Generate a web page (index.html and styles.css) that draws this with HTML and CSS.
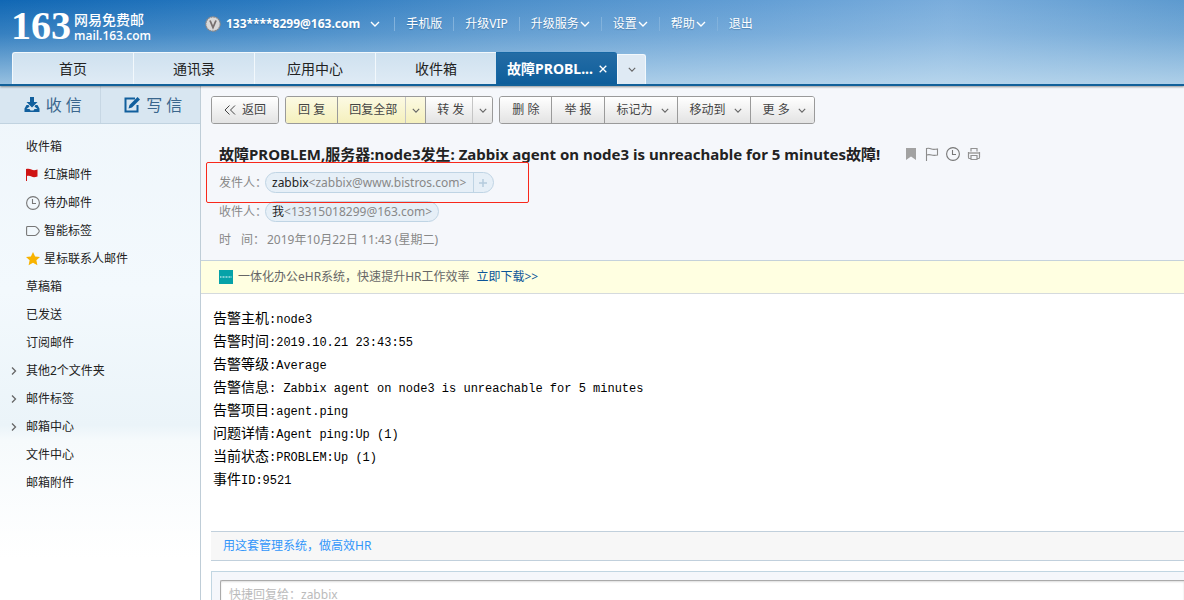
FILE: index.html
```html
<!DOCTYPE html>
<html lang="zh-CN">
<head>
<meta charset="utf-8">
<title>网易免费邮</title>
<link rel="stylesheet" href="styles.css">
</head>
<body>
<svg class="defs" aria-hidden="true">
  <symbol id="down" viewBox="0 0 10 6"><path d="M1 1l4 4 4-4" fill="none" stroke="currentColor" stroke-width="1.4"/></symbol>
  <symbol id="right" viewBox="0 0 6 8"><path d="M1 .5L4.500 4 1 7.500" fill="none" stroke="currentColor" stroke-width="1.300"/></symbol>
  <symbol id="clock" viewBox="0 0 14 14"><circle cx="7" cy="7" r="6.400" fill="none" stroke="currentColor" stroke-width="1.100"/><path d="M6.500 3v4.500H10" fill="none" stroke="currentColor" stroke-width="1.100"/></symbol>
</svg>
<header class="header">
  <div class="topline">
    <a class="logo" href="#"><span class="logo-num">163</span><span class="logo-text"><span class="logo-cn">网易免费邮</span><span class="logo-en">mail.163.com</span></span></a>
    <nav class="account">
      <svg class="medal" viewBox="0 0 16 16"><circle cx="8" cy="8" r="7.200" fill="#d9d9d9" stroke="#8c8888" stroke-width="1.200" stroke-dasharray="2 .6"/><path d="M5 4.500L8 11.500l3-7" fill="none" stroke="#77706f" stroke-width="1.800"/></svg>
      <a class="user" href="#">133****8299@163.com <svg class="down"><use href="#down"/></svg></a>
      <a href="#">手机版</a>
      <a href="#">升级VIP</a>
      <a href="#">升级服务<svg class="down"><use href="#down"/></svg></a>
      <a href="#">设置<svg class="down"><use href="#down"/></svg></a>
      <a href="#">帮助<svg class="down"><use href="#down"/></svg></a>
      <a href="#">退出</a>
    </nav>
  </div>
  <nav class="tabs">
    <a class="tab" href="#">首页</a>
    <a class="tab" href="#">通讯录</a>
    <a class="tab" href="#">应用中心</a>
    <a class="tab" href="#">收件箱</a>
    <div class="tab active"><a href="#">故障PROBL...</a><button class="close" aria-label="关闭"><svg viewBox="0 0 8 8"><path d="M.7.700l6.600 6.600M7.300.700L.700 7.300" stroke="currentColor" stroke-width="1.300"/></svg></button></div>
    <button class="tab-more" aria-label="更多标签"><svg class="down small"><use href="#down"/></svg></button>
  </nav>
</header>
<div class="layout">
  <aside class="sidebar">
    <div class="actions">
      <button><svg viewBox="0 0 16 16"><path d="M6 0h4v5h3.500L8 10.500 2.500 5H6zM2.500 8L.500 11.500V15h15v-3.500L13.500 8h-2l-1 1.500 3 2.500h-3l-1 1.500h-3l-1-1.500h-3l3-2.500-1-1.500z" fill="currentColor"/></svg>收 信</button>
      <button><svg viewBox="0 0 16 16"><path d="M11 1.500H1.500v13h12V8" fill="none" stroke="currentColor" stroke-width="2"/><path d="M13.500 0L16 2.500 8 10.500l-3.500 1 1-3.500z" fill="currentColor"/></svg>写 信</button>
    </div>
    <nav class="folders">
      <a href="#">收件箱</a>
      <a href="#"><svg class="icon" viewBox="0 0 14 14"><path d="M0 1C2 .300 4 .700 5.500 1.500s3 1 6 0v7c-3 1-4.500.800-6 0S2.500 7.500 1 8v5H0z" fill="#cf1414"/></svg>红旗邮件</a>
      <a href="#"><svg class="icon gray"><use href="#clock"/></svg>待办邮件</a>
      <a href="#"><svg class="icon gray" viewBox="0 0 14 14"><path d="M1.500 2.500H9c1.500 0 4.300 3.500 4.300 4.500S10.500 11.500 9 11.500H1.500Q.600 11.500.600 10.600V3.400Q.600 2.500 1.500 2.500z" fill="none" stroke="currentColor" stroke-width="1.100"/></svg>智能标签</a>
      <a href="#"><svg class="icon" viewBox="0 0 14 14"><path d="M7 0l2.100 4.400 4.900.600-3.600 3.300 1 4.900L7 10.800l-4.400 2.400 1-4.900L0 5l4.900-.6z" fill="#f8b300"/></svg>星标联系人邮件</a>
      <a href="#">草稿箱</a>
      <a href="#">已发送</a>
      <a href="#">订阅邮件</a>
      <a class="group" href="#"><svg class="right"><use href="#right"/></svg>其他2个文件夹</a>
      <a class="group" href="#"><svg class="right"><use href="#right"/></svg>邮件标签</a>
      <a class="group" href="#"><svg class="right"><use href="#right"/></svg>邮箱中心</a>
      <a href="#">文件中心</a>
      <a href="#">邮箱附件</a>
    </nav>
  </aside>
  <main class="main">
    <section class="mail-head">
      <div class="toolbar">
        <div class="buttons"><button class="back"><svg viewBox="0 0 12 10"><path d="M5.500.500L1 5l4.500 4.500M11 .500L6.500 5 11 9.500" fill="none" stroke="currentColor"/></svg>返回</button></div>
        <div class="buttons">
          <button class="yellow">回 复</button><button class="yellow split">回复全部</button><button class="yellow arrow" aria-label="回复选项"><svg class="down small"><use href="#down"/></svg></button><button class="split">转 发</button><button class="arrow" aria-label="转发选项"><svg class="down small"><use href="#down"/></svg></button>
        </div>
        <div class="buttons">
          <button>删 除</button><button>举 报</button><button class="drop">标记为<svg class="down small"><use href="#down"/></svg></button><button class="drop">移动到<svg class="down small"><use href="#down"/></svg></button><button class="drop">更 多<svg class="down small"><use href="#down"/></svg></button>
        </div>
      </div>
      <div class="subject">
        <h1>故障PROBLEM,服务器:node3发生: Zabbix agent on node3 is unreachable for 5 minutes故障!</h1>
        <div class="marks">
          <button aria-label="标签"><svg viewBox="0 0 14 14"><path d="M2 1h10v12L7 9.500 2 13z" fill="#a2a2a2"/></svg></button>
          <button aria-label="红旗"><svg viewBox="0 0 14 14"><path d="M1.500 14V1.500C4 .800 5 1.300 6.500 2s3.500.500 6 0v6c-2.500.500-4 .600-6 0s-3-.6-5 0" fill="none" stroke="#8b8b8b" stroke-width="1.100"/></svg></button>
          <button aria-label="待办"><svg><use href="#clock"/></svg></button>
          <button aria-label="打印"><svg viewBox="0 0 14 14"><path d="M4 4.500v-3h6v3M3.500 11.500h-1.500Q1.500 11.500 1.500 10V5.500h11V10q0 1.500-.5 1.500h-1.500M4 8.500h6v4H4z" fill="none" stroke="#929292" stroke-width="1.200"/><path d="M2 5h10v2H2z" fill="#b5b5b5"/></svg></button>
        </div>
      </div>
      <dl class="meta">
        <div class="row"><dt>发件人：</dt><dd><span class="chip"><b>zabbix</b>&lt;zabbix@www.bistros.com&gt;<button aria-label="添加联系人"><svg viewBox="0 0 8 8"><path d="M4 0v8M0 4h8" stroke="#b5cbdd" stroke-width="1.500"/></svg></button></span></dd></div>
        <div class="row"><dt>收件人：</dt><dd><span class="chip"><b>我</b>&lt;13315018299@163.com&gt;</span></dd></div>
        <div class="row time"><dt><span>时</span><span>间：</span></dt><dd>2019年10月22日 11:43 (星期二)</dd></div>
        <div class="highlight"></div>
      </dl>
    </section>
    <aside class="promo"><svg viewBox="0 0 14 14"><path d="M0 0h14v14H0z" fill="#06a2a8"/><path d="M1 7h12" stroke="#a4dfe1" stroke-width="1.500" stroke-dasharray="1 .5"/></svg><span>一体化办公eHR系统，快速提升HR工作效率</span><a href="#">立即下载&gt;&gt;</a></aside>
    <article class="content">
      <p>告警主机<span>:node3</span></p>
      <p>告警时间<span>:2019.10.21 23:43:55</span></p>
      <p>告警等级<span>:Average</span></p>
      <p>告警信息<span>: Zabbix agent on node3 is unreachable for 5 minutes</span></p>
      <p>告警项目<span>:agent.ping</span></p>
      <p>问题详情<span>:Agent ping:Up (1)</span></p>
      <p>当前状态<span>:PROBLEM:Up (1)</span></p>
      <p>事件<span>ID:9521</span></p>
    </article>
    <div class="footer-ad"><a href="#">用这套管理系统，做高效HR</a></div>
    <form class="reply"><textarea aria-label="快捷回复" placeholder="快捷回复给：zabbix"></textarea></form>
  </main>
</div>
</body>
</html>
```
FILE: styles.css
```css
* { box-sizing: border-box; }
body, h1, p, dl, dd { margin: 0; }
body {
  display: flex;
  flex-direction: column;
  height: 100vh;
  overflow: hidden;
  background: #fff;
  color: #222;
  font: 12px/20px "Noto Sans", "Noto Sans CJK SC", sans-serif;
}
a { color: inherit; text-decoration: none; }
button { margin: 0; padding: 0; border: 0; background: none; color: inherit; font: inherit; }
svg { flex: none; display: block; }
.defs { position: absolute; width: 0; height: 0; }
.down { width: 10px; height: 6px; }
.down.small { width: 8px; height: 5px; color: #666; }

.header {
  flex: none;
  position: relative;
  border-bottom: 2px solid #12619a;
  box-shadow: 0 1px 2px rgba(0, 0, 0, .4);
  background:
    linear-gradient(rgba(208, 230, 243, 0), rgba(208, 230, 243, .2) 40%, rgba(208, 230, 243, .7)),
    linear-gradient(90deg, #1067b4, #2a79bf 22%, #4b8eca 42%, #649fd5 65%, #7aaddc 80%, #5d9acf);
}
.topline { display: flex; align-items: center; height: 52px; padding-left: 11px; color: #fff; }
.logo { display: flex; align-items: center; gap: 3px; width: 194px; }
.logo-num { font: bold 40px/52px "Liberation Serif", serif; }
.logo-text { display: flex; flex-direction: column; padding-top: 4px; }
.logo-cn { font-size: 14px; line-height: 16px; font-weight: 500; }
.logo-en { font: 600 12px/16px "Open Sans", sans-serif; }
.account { display: flex; align-items: center; height: 48px; margin-bottom: 4px; }
.account a { display: flex; align-items: center; gap: 1px; padding: 0 11px; line-height: 14px; white-space: nowrap; text-shadow: 0 1px 1px rgba(0, 50, 100, .3); }
.account a + a { border-left: 1px solid #82b2dc; }
.account .user { gap: 10px; padding-left: 5px; padding-right: 14px; font-weight: bold; }
.medal { width: 16px; height: 16px; }

.tabs { display: flex; align-items: flex-end; height: 32px; padding-left: 12px; font-size: 14px; }
.tab {
  display: flex;
  align-items: center;
  justify-content: center;
  width: 121px;
  height: 32px;
  border-top: 1px solid #f2f8fc;
  border-left: 1px solid #f2f8fc;
  background: linear-gradient(#cfe1ef, #dfebf5);
}
.tab:first-child { border-top-left-radius: 3px; }
.tab.active { gap: 6px; border-color: #1768a5; border-top-right-radius: 3px; background: linear-gradient(#246ca5, #0e5e9b); color: #fff; font-weight: bold; white-space: nowrap; }
.close svg { width: 8px; height: 8px; }
.tab-more { display: flex; align-items: center; justify-content: center; width: 29px; height: 30px; border: 1px solid #f2f8fc; border-bottom: 0; border-radius: 0 3px 0 0; background: #dfeaf4; }

.layout { display: flex; flex: 1; min-height: 0; }
.sidebar {
  flex: none;
  width: 201px;
  border-right: 1px solid #bfcdd7;
  background: linear-gradient(#eff6fb, #f3f9fd 40%, #ebf4f9 66%, #f6fafc 69%, #fff 92%);
}
.actions { display: flex; height: 38px; border-bottom: 1px solid #c1d3e0; background: #d8e6f1; color: #3a668d; font-size: 16px; }
.actions button { flex: 1; display: flex; align-items: center; justify-content: center; gap: 6px; padding-left: 6px; }
.actions button + button { border-left: 1px solid #c7d7e4; }
.actions svg { width: 16px; height: 16px; color: #115f9d; }
.folders { padding-top: 9px; }
.folders a { display: flex; align-items: center; gap: 4px; height: 28px; padding-left: 26px; }
.folders .group { gap: 9px; padding-left: 11px; }
.icon { width: 14px; height: 14px; }
.gray { color: #777; }
.right { width: 6px; height: 8px; color: #666; }

.main { flex: 1; min-width: 0; overflow: hidden; }
.mail-head { padding: 10px 10px 7px; border-bottom: 1px solid #c5d2dc; background: #f5f7fb; }
.toolbar { display: flex; gap: 6px; color: #444; }
.buttons { display: flex; height: 28px; border: 1px solid #9a9a9a; border-radius: 3px; overflow: hidden; }
.buttons button { display: flex; align-items: center; justify-content: center; padding: 0 12px; background: linear-gradient(#fff, #e3e3e3); white-space: nowrap; }
.buttons button + button { border-left: 1px solid #9a9a9a; }
.buttons .yellow { background: linear-gradient(#fcfae4, #f5f0bd); }
.buttons .split { padding: 0 8px 0 11px; }
.buttons .arrow { width: 20px; padding: 0; }
.buttons button + .arrow { border-left-color: #c5c5c5; }
.buttons .back { gap: 6px; }
.back svg { width: 12px; height: 10px; }
.buttons .drop { gap: 8px; padding-right: 8px; padding-left: 12px; }
.subject { display: flex; align-items: center; gap: 24px; padding: 20px 8px 0; }
.subject h1 { font-size: 15px; line-height: 20px; white-space: nowrap; }
.marks { display: flex; gap: 7px; color: #777; }
.marks svg { width: 14px; height: 14px; }
.meta { position: relative; padding: 4px 8px 0; color: #888; }
.row { display: flex; align-items: center; height: 29px; }
.row dt { display: flex; justify-content: space-between; width: 46px; white-space: nowrap; }
.row.time { height: 27px; }
.row.time dd { padding-left: 2px; }
.chip { display: flex; align-items: center; height: 21px; padding: 0 6px; border: 1px solid #bfd4e4; border-radius: 11px; background: #e6eff7; }
.chip b { color: #222; font-weight: normal; }
.chip button { display: flex; align-items: center; align-self: stretch; padding-left: 5px; margin-left: 7px; border-left: 1px solid #bfd4e4; }
.chip button svg { width: 8px; height: 8px; }
.highlight { position: absolute; top: -2px; left: -5px; width: 323px; height: 41px; border: 1px solid #f8281b; border-radius: 2px; }
.promo { display: flex; align-items: center; gap: 5px; height: 33px; padding-left: 18px; border-bottom: 1px solid #d5dadd; background: #ffffe1; color: #666; }
.promo svg { width: 14px; height: 14px; }
.promo a { margin-left: 2px; color: #0c5598; }
.content { padding: 12px 12px 41px; color: #000; font-size: 14px; line-height: 23px; }
.content span { font: 12px/12px "Liberation Mono", monospace; }
.footer-ad { margin-left: 10px; padding: 4px 12px; border: solid #c1d0dc; border-width: 1px 0; background: #f7f7f7; color: #3296fa; }
.reply { margin: 10px 0 0 10px; padding: 8px 0 8px 8px; border: solid #c1d6e2; border-width: 1px 0 0 1px; background: #f5f7fb; }
.reply textarea { display: block; width: 100%; height: 80px; padding: 4px 8px; border: 1px solid #aaa; border-right: 0; border-radius: 2px 0 0; box-shadow: inset 0 1px 2px #ddd; font: inherit; resize: none; }
.reply textarea::placeholder { color: #bbb; }
```
